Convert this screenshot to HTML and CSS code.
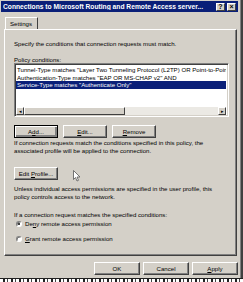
FILE: index.html
```html
<!DOCTYPE html>
<html>

<head>
    <title>Connections to Microsoft Routing and Remote Access server Properties</title>

    <link rel="stylesheet" href="styles.css">
</head>

<body>
    <div class="window">
        <div class="titlebar">
            <span class="title">Connections to Microsoft Routing and Remote Access server...</span>
            <span class="caption-btn">?</span>
            <span class="caption-btn">&#215;</span>
        </div>

        <div class="tabs">
            <div class="tab">Settings</div>
        </div>

        <div class="panel">
            <p class="intro">Specify the conditions that connection requests must match.</p>
            <p class="label">Policy conditions:</p>

            <div class="listbox">
                <div class="rows">
                    <div class="row">Tunnel-Type matches "Layer Two Tunneling Protocol (L2TP) OR Point-to-Point"</div>
                    <div class="row">Authentication-Type matches "EAP OR MS-CHAP v2" AND</div>
                    <div class="row selected">Service-Type matches "Authenticate Only"</div>
                </div>
                <div class="hscroll">
                    <span class="sb-btn">&#9666;</span>
                    <span class="sb-thumb"></span>
                    <span class="sb-track"></span>
                    <span class="sb-btn">&#9656;</span>
                </div>
            </div>

            <div class="btn-row">
                <button class="btn default">A<u>d</u>d...</button>
                <button class="btn"><u>E</u>dit...</button>
                <button class="btn"><u>R</u>emove</button>
            </div>

            <p class="note">If connection requests match the conditions specified in this policy, the associated profile will be applied to the connection.</p>

            <button class="btn profile">Edit <u>P</u>rofile...</button>

            <p class="note second">Unless individual access permissions are specified in the user profile, this policy controls access to the network.</p>

            <p class="label match">If a connection request matches the specified conditions:</p>

            <div class="radio"><span class="dot checked"></span><span>De<u>n</u>y remote access permission</span></div>
            <div class="radio"><span class="dot"></span><span><u>G</u>rant remote access permission</span></div>
        </div>

        <div class="footer">
            <button class="btn wide">OK</button>
            <button class="btn wide">Cancel</button>
            <button class="btn wide"><u>A</u>pply</button>
        </div>
    </div>
    <div class="taskbar"></div>

    <svg class="cursor" width="8" height="12" viewBox="0 0 8 12">
        <path d="M0.5 0.5 L0.5 9.5 L2.5 7.5 L4 11 L5.5 10.3 L4 7 L7 7 Z" fill="#fff" stroke="#555" stroke-width="0.8"/>
    </svg>
</body>

</html>
```

FILE: styles.css
```css
body {
    margin: 0;
    width: 243px;
    height: 282px;
    overflow: hidden;
    background: #d4d0c8;
    font: 6.1px/7.5px "Liberation Sans", Arial, sans-serif;
    color: #000;
    position: relative;
}

p {
    margin: 0;
}

.window {
    box-sizing: border-box;
    width: 243px;
    height: 278px;
    padding: 1px 3px 0 1px;
    border-right: 2px solid #404040;
    box-shadow: inset -1px 0 #808080;
}

.titlebar {
    height: 11px;
    background: #0a1f78;
    display: flex;
    align-items: center;
    padding: 0 2px 0 2px;
    gap: 2px;
}

.title {
    flex: 1;
    color: #fff;
    font-weight: bold;
    font-size: 6.7px;
    white-space: nowrap;
    overflow: hidden;
}

.caption-btn {
    box-sizing: border-box;
    width: 9px;
    height: 8px;
    background: #d4d0c8;
    border: 1px solid;
    border-color: #fff #404040 #404040 #fff;
    font-weight: bold;
    font-size: 7px;
    line-height: 6px;
    text-align: center;
}

.tabs {
    display: flex;
    padding: 5px 0 0 4px;
}

.tab {
    box-sizing: border-box;
    width: 33px;
    height: 12px;
    padding-left: 4px;
    line-height: 11px;
    border: 1px solid;
    border-bottom: none;
    border-color: #fff #404040 transparent #fff;
}

.panel {
    box-sizing: border-box;
    width: 233px;
    height: 227px;
    margin-left: 3px;
    padding: 10px 0 0 9px;
    border: 1px solid;
    border-color: #fff #404040 #404040 #fff;
    box-shadow: inset -1px -1px #808080;
}

.label {
    margin-top: 8px;
}

.listbox {
    box-sizing: border-box;
    width: 215px;
    height: 54px;
    background: #fff;
    border: 1px solid;
    border-color: #808080 #fff #fff #808080;
    box-shadow: inset 1px 1px #404040, inset -1px -1px #d4d0c8;
    padding: 2px 2px 1px 1px;
    display: flex;
    flex-direction: column;
}

.rows {
    flex: 1;
    overflow: hidden;
}

.row {
    white-space: nowrap;
    overflow: hidden;
    padding-left: 1px;
    line-height: 7.5px;
}

.row.selected {
    background: #0a1f78;
    color: #fff;
}

.hscroll {
    display: flex;
    height: 8px;
}

.sb-btn,
.sb-thumb {
    box-sizing: border-box;
    background: #d4d0c8;
    border: 1px solid;
    border-color: #fff #404040 #404040 #fff;
}

.sb-btn {
    width: 8px;
    font-size: 5px;
    line-height: 6px;
    text-align: center;
}

.sb-thumb {
    width: 101px;
}

.sb-track {
    flex: 1;
    background: #ebe9e4;
}

.btn {
    box-sizing: border-box;
    height: 13px;
    padding: 0;
    background: #d4d0c8;
    border: 1px solid;
    border-color: #fff #404040 #404040 #fff;
    box-shadow: inset -1px -1px #808080;
    font: inherit;
    color: #000;
    text-align: center;
}

.btn-row {
    display: flex;
    gap: 5px;
    margin-top: 8px;
}

.btn-row .btn {
    width: 44px;
}

.btn.default {
    border-color: #000;
    box-shadow: inset 1px 1px #fff, inset -2px -2px #808080;
}

.note {
    margin-top: 1px;
    width: 214px;
}

.profile {
    display: block;
    width: 44px;
    margin-top: 13px;
}

.note.second {
    margin-top: 5px;
}

.label.match {
    margin-top: 11px;
}

.radio {
    display: flex;
    align-items: center;
    gap: 3px;
    height: 8px;
    margin: 1px 0 0 2px;
}

.radio + .radio {
    margin-top: 7px;
}

.dot {
    box-sizing: border-box;
    width: 6px;
    height: 6px;
    border-radius: 50%;
    background: #fff;
    border: 1px solid;
    border-color: #808080 #fff #fff #808080;
    box-shadow: inset 0.5px 0.5px #404040;
    position: relative;
}

.dot.checked::after {
    content: "";
    position: absolute;
    left: 1px;
    top: 1px;
    width: 2px;
    height: 2px;
    border-radius: 50%;
    background: #000;
}

.footer {
    display: flex;
    justify-content: flex-end;
    gap: 3px;
    margin-top: 6px;
}

.btn.wide {
    width: 46px;
}

.taskbar {
    height: 4px;
    border-top: 1px solid #202020;
    background: repeating-linear-gradient(90deg, #fff 0 3px, #222 3px 5px, #fff 5px 7px, #444 7px 8px);
}

.cursor {
    position: absolute;
    left: 73px;
    top: 170px;
}
```
